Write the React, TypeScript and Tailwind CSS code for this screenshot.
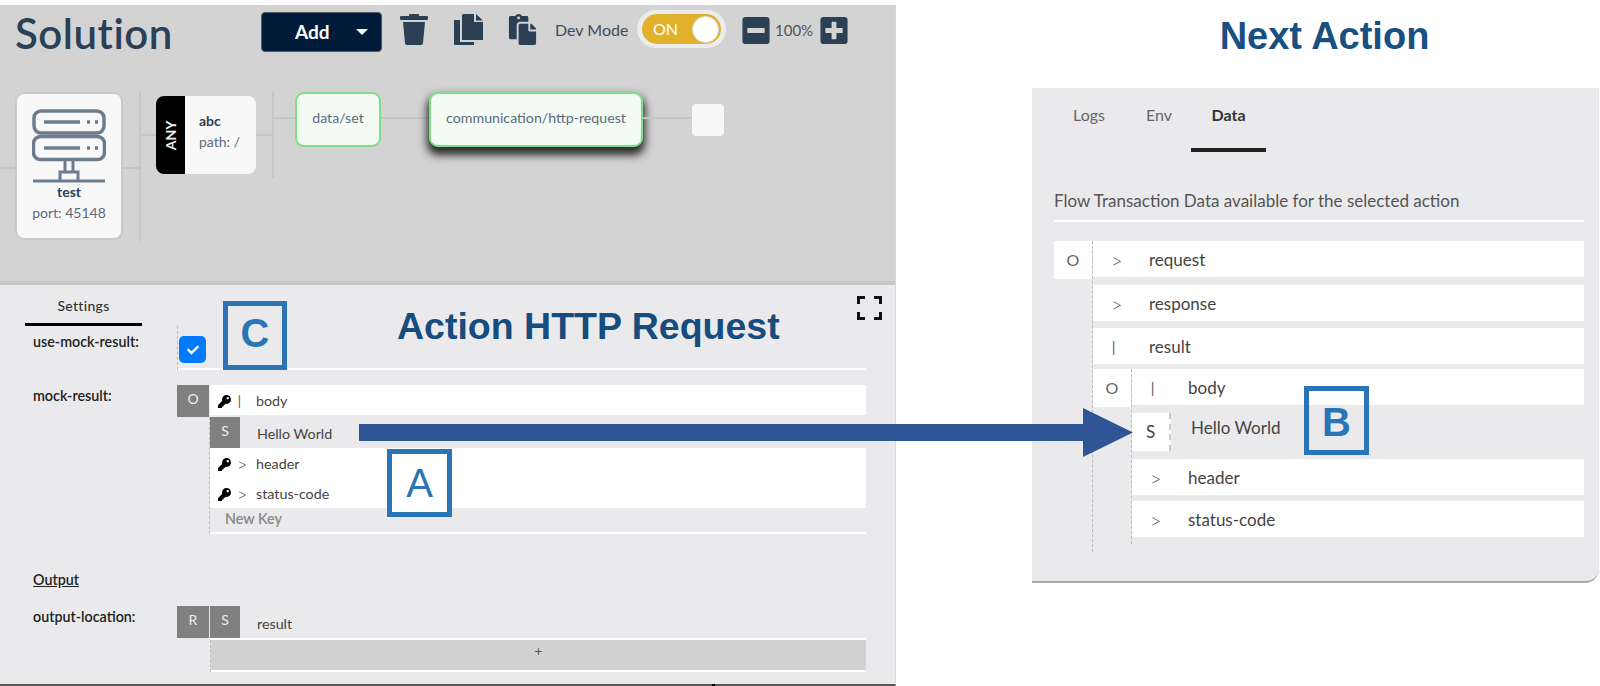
import { FaCheck, FaKey, FaMinusSquare, FaPlusSquare, FaPaste } from "react-icons/fa";

const font = { fontFamily: "Lato, 'Open Sans', sans-serif" };

function TrashIcon() {
  return (
    <svg width="28" height="31" viewBox="0 0 28 31" fill="#2b3f55">
      <rect x="9" y="0" width="10" height="3" rx="1" />
      <rect x="0" y="2" width="28" height="4" rx="1" />
      <path d="M3 8h22l-2 21a2 2 0 0 1-2 2H7a2 2 0 0 1-2-2z" />
    </svg>
  );
}

function CopyIcon() {
  return (
    <svg width="29" height="31" viewBox="0 0 29 31" fill="#2b3f55">
      <path d="M9 0H20V8H29V26H8V1z" />
      <path d="M22 0l7 6.500h-7z" />
      <path d="M0 6h6v22h14v3H1a1 1 0 0 1-1-1z" />
    </svg>
  );
}

function ServerIcon() {
  return (
    <svg width="74" height="74" viewBox="0 0 74 74" fill="none" stroke="#6c7c8e" strokeWidth="3.500">
      <rect x="2" y="2" width="70" height="22" rx="7" />
      <rect x="1.500" y="27.500" width="71" height="23" rx="7" />
      <path d="M12 13h36M12 39h36" />
      <path d="M55 13h3M63 13h3M55 39h3M63 39h3" strokeWidth="3.500" />
      <path d="M33 51v12M41 51v12M28 72v-9h18v9M1 72h72" strokeWidth="3" />
    </svg>
  );
}

function FullscreenIcon() {
  return (
    <svg width="25" height="24" viewBox="0 0 25 24" fill="none" stroke="#111" strokeWidth="3">
      <path d="M1.500 8V1.500H8M17 1.500h6.500V8M1.500 16v6.500H8M17 22.500h6.500V16" />
    </svg>
  );
}

function GrayCell({ label, className }: { label: string; className: string }) {
  return (
    <div className={`flex justify-center bg-[#808080] pt-[3px] text-[14px] text-[#eee] ${className}`}>{label}</div>
  );
}

function KeyRow({ mark, label }: { mark: string; label: string }) {
  return (
    <div className="flex h-[30px] items-center bg-white pt-[2px] text-[14.300px] text-[#444]">
      <FaKey className="ml-[8px] h-[13px] w-[13px] text-black" />
      <span className="ml-[6px] w-[19px] text-[18px] font-light leading-none text-[#555]">{mark}</span>
      <span>{label}</span>
    </div>
  );
}

function DataRow({ mark, label, className }: { mark: string; label: string; className: string }) {
  return (
    <div className={`flex h-[36px] items-center bg-white pl-[18px] pt-[2px] text-[17px] text-[#444] ${className}`}>
      <span className="w-[38px] text-[20px] font-light leading-none text-[#555]">{mark}</span>
      <span>{label}</span>
    </div>
  );
}

function Tag({ label, className }: { label: string; className: string }) {
  return (
    <div
      className={`absolute flex items-center justify-center border-[5px] border-[#2a75b5] text-[40px] leading-none text-[#2a75b5] ${className}`}
      style={{ fontFamily: "'Liberation Sans', sans-serif" }}
    >
      {label}
    </div>
  );
}

export default function App() {
  return (
    <div className="relative flex h-[686px] w-[1600px] overflow-hidden bg-white" style={font}>
      <div className="mt-[5px] flex h-[681px] w-[896px] shrink-0 flex-col border-b-2 border-r border-[#555] border-r-[#d8d8d8]">
        {/* flow canvas */}
        <div className="h-[276px] shrink-0 bg-[#d3d3d3] pl-px">
          <div className="flex h-[87px] items-start">
            <div className="ml-[14px] mt-[3px] w-[246px] text-[42px] font-semibold leading-[50px] tracking-[0.5px] text-[#2b3f55]">Solution</div>
            <button className="mt-[7px] flex h-[40px] w-[121px] items-center rounded-[4px] border border-[#556] bg-[#011c3a] pl-[33px] text-[19px] font-bold text-white">
              Add
              <span className="ml-[26px] h-0 w-0 border-x-[6px] border-t-[6px] border-x-transparent border-t-white" />
            </button>
            <div className="ml-[18px] mt-[9px]"><TrashIcon /></div>
            <div className="ml-[26px] mt-[9px]"><CopyIcon /></div>
            <div className="ml-[25px] mt-[9px]"><FaPaste className="h-[31px] w-[29px] text-[#2b3f55]" /></div>
            <div className="ml-[18px] mt-[16px] w-[74px] whitespace-nowrap text-[16px] leading-[18px] text-[#3c4c5e]">Dev Mode</div>
            <div className="ml-[8px] mt-[5px] flex h-[38px] w-[89px] items-center justify-center rounded-full bg-[#ececec]">
              <div className="flex h-[30px] w-[79px] items-center justify-between rounded-full bg-[#e2b12c] pl-[11px] pr-[2px] text-[16px] text-white">
                ON
                <span className="h-[27px] w-[27px] rounded-full border border-[#ddd] bg-white" />
              </div>
            </div>
            <FaMinusSquare className="ml-[16px] mt-[10px] h-[31px] w-[28px] text-[#2b3f55]" />
            <div className="ml-[5px] mt-[16px] w-[45px] text-[15px] leading-[18px] text-[#555]">100%</div>
            <FaPlusSquare className="mt-[10px] h-[31px] w-[28px] text-[#2b3f55]" />
          </div>

          <div className="flex items-start">
            <div className="mt-[75px] h-[2px] w-[14px] bg-[#c6c6c6]" />
            <div className="flex h-[148px] w-[108px] flex-col items-center rounded-[9px] border-2 border-[#c9c9c9] bg-[#f8f8f8] pt-[15px]">
              <ServerIcon />
              <div className="text-[14px] font-bold leading-[18px] text-[#2b3f55]">test</div>
              <div className="mt-[3px] text-[14px] leading-[18px] text-[#5c6b7b]">port: 45148</div>
            </div>
            <div className="mt-[75px] h-[2px] w-[16px] bg-[#c6c6c6]" />
            <div className="h-[149px] w-[2px] bg-[#c6c6c6]" />
            <div className="mt-[42px] h-[2px] w-[15px] bg-[#c6c6c6]" />
            <div className="mt-[4px] flex h-[78px] w-[100px] overflow-hidden rounded-[8px] bg-[#f8f8f8]">
              <div className="flex w-[29px] items-center justify-center bg-black">
                <span className="-rotate-90 text-[14px] font-bold text-[#eee]">ANY</span>
              </div>
              <div className="pl-[14px] pt-[15px]">
                <div className="text-[14px] font-bold leading-[20px] text-[#2b3f55]">abc</div>
                <div className="text-[14px] leading-[22px] text-[#5c6b7b]">path: /</div>
              </div>
            </div>
            <div className="mt-[42px] h-[2px] w-[16px] bg-[#c6c6c6]" />
            <div className="h-[86px] w-[2px] bg-[#c6c6c6]" />
            <div className="mt-[25px] h-[2px] w-[21px] bg-[#c6c6c6]" />
            <div className="flex h-[55px] w-[86px] justify-center rounded-[9px] border-2 border-[#7fdf85] bg-[#f4faf4] pt-[14px] text-[14.200px] leading-[20px] text-[#5c6b7b]">
              data/set
            </div>
            <div className="mt-[25px] h-[2px] w-[48px] bg-[#c6c6c6]" />
            <div className="flex h-[55px] w-[214px] justify-center rounded-[9px] border-2 border-[#7fdf85] bg-[#f4faf4] pt-[14px] text-[14.200px] leading-[20px] text-[#5c6b7b] shadow-[0_6px_8px_2px_#2a2a2a]">
              communication/http-request
            </div>
            <div className="mt-[25px] h-[2px] w-[49px] bg-[#c6c6c6]" />
            <div className="mt-[12px] h-[32px] w-[32px] rounded-[4px] bg-[#f8f8f8]" />
          </div>
        </div>

        <div className="h-[4px] shrink-0 bg-[#c6c6c6]" />

        {/* settings */}
        <div className="min-h-0 flex-1 bg-[#eaeaec] pl-[33px] pr-[29px] text-[14.300px] text-[#222]">
          <div className="ml-[-8px] flex h-[41px] w-[117px] justify-center border-b-[3px] border-black pt-[11px] text-[14px] font-medium leading-[20px] tracking-[0.3px] text-[#333]">
            Settings
          </div>

          <div className="flex">
            <div className="w-[144px] pt-[6px] font-semibold leading-[20px]">use-mock-result:</div>
            <div className="h-[44px] flex-1 border-l border-dashed border-[#bbb]">
              <div className="flex h-full items-end border-b-2 border-white pb-[5px] pl-px">
                <div className="flex h-[27px] w-[27px] items-center justify-center rounded-[5px] bg-[#007bff]">
                  <FaCheck className="h-[12px] w-[12px] text-white" />
                </div>
              </div>
            </div>
          </div>

          <div className="mt-[15px] flex">
            <div className="w-[144px] pt-[1px] font-semibold leading-[20px]">mock-result:</div>
            <div className="flex-1">
              <div className="flex">
                <GrayCell label="O" className="h-[32px] w-[32px] shrink-0" />
                <div className="ml-px flex-1"><KeyRow mark="I" label="body" /></div>
              </div>
              <div className="ml-[32px] border-l border-dashed border-[#bbb]">
                <div className="border-b-2 border-white">
                  <div className="flex h-[31px]">
                    <GrayCell label="S" className="w-[30px]" />
                    <span className="ml-[17px] pt-[6px] text-[#444]">Hello World</span>
                  </div>
                  <KeyRow mark=">" label="header" />
                  <KeyRow mark=">" label="status-code" />
                  <div className="flex h-[24px] items-start pl-[15px] font-semibold text-[#888]">New Key</div>
                </div>
              </div>
            </div>
          </div>

          <div className="mt-[36px] font-semibold leading-[20px] underline">Output</div>

          <div className="mt-[16px] flex">
            <div className="w-[144px] pt-[1px] font-semibold leading-[20px]">output-location:</div>
            <div className="flex-1">
              <div className="flex">
                <GrayCell label="R" className="h-[32px] w-[32px] shrink-0" />
                <div className="ml-px flex flex-1 border-b-2 border-b-white">
                  <GrayCell label="S" className="h-[32px] w-[30px]" />
                  <span className="ml-[17px] pt-[7px] text-[#444]">result</span>
                </div>
              </div>
              <div className="ml-[33px] border-l border-dashed border-[#bbb]">
                <div className="flex h-[32px] justify-center border-b-2 border-white bg-[#d2d2d2] text-[#555]">+</div>
              </div>
            </div>
          </div>
        </div>
      </div>

      {/* next action */}
      <div className="ml-[136px] flex-1">
        <div
          className="ml-[17px] mt-[14px] h-[74px] text-center text-[38px] font-bold leading-[44px] text-[#1a4f82]"
          style={{ fontFamily: "'Liberation Sans', sans-serif" }}
        >
          Next Action
        </div>
        <div className="mr-px h-[495px] rounded-br-[14px] border-b-2 border-[#aaa] bg-[#eaeaec] pl-[22px] pr-[15px]">
          <div className="flex h-[64px] items-start text-[16px] text-[#666]">
            <div className="ml-[19px] w-[73px] pt-[16px] leading-[22px]">Logs</div>
            <div className="w-[45px] pt-[16px] leading-[22px]">Env</div>
            <div className="flex h-[64px] w-[75px] justify-center border-b-4 border-[#222] pt-[16px] font-bold leading-[22px] text-[#333]">Data</div>
          </div>
          <div className="mt-[38px] h-[32px] border-b-2 border-white text-[17px] leading-[22px] text-[#555]">
            Flow Transaction Data available for the selected action
          </div>
          <div className="mt-[19px] flex">
            <div className="flex h-[38px] w-[38px] shrink-0 items-center justify-center bg-white text-[16px] text-[#666]">O</div>
            <div className="h-[311px] flex-1 border-l border-dashed border-[#bbb]">
              <DataRow mark=">" label="request" className="" />
              <DataRow mark=">" label="response" className="mt-[8px]" />
              <DataRow mark="I" label="result" className="mt-[7px]" />
              <div className="mt-[5px] flex">
                <div className="flex h-[38px] w-[38px] shrink-0 items-center justify-center bg-white text-[16px] text-[#666]">O</div>
                <div className="h-[175px] flex-1 border-l border-dashed border-[#bbb]">
                  <DataRow mark="I" label="body" className="" />
                  <div className="mt-[8px] flex h-[38px] items-center text-[17px] text-[#444]">
                    <div className="flex h-[38px] w-[39px] items-center justify-center border-r-2 border-dashed border-[#ccc] bg-white text-[#444]">S</div>
                    <span className="mb-[8px] ml-[20px]">Hello World</span>
                  </div>
                  <DataRow mark=">" label="header" className="mt-[8px]" />
                  <DataRow mark=">" label="status-code" className="mt-[6px]" />
                </div>
              </div>
            </div>
          </div>
        </div>
      </div>

      {/* annotations over the screenshots */}
      <div
        className="absolute left-[397px] top-[303px] text-[37.500px] font-bold leading-[46px] text-[#164c7e]"
        style={{ fontFamily: "'Liberation Sans', sans-serif" }}
      >
        Action HTTP Request
      </div>
      <div className="absolute left-[857px] top-[296px]"><FullscreenIcon /></div>
      <div className="absolute left-[712px] top-[684px] h-[2px] w-[3px] bg-black" />
      <Tag label="C" className="left-[223px] top-[301px] h-[69px] w-[64px] pb-[5px] font-bold" />
      <Tag label="A" className="left-[387px] top-[449px] h-[68px] w-[65px] bg-white" />
      <Tag label="B" className="left-[1304px] top-[386px] h-[69px] w-[65px] pt-[3px] font-bold" />
      <svg className="absolute left-[359px] top-[408px]" width="775" height="50" viewBox="0 0 775 50">
        <path d="M0 16H724V0L774 24.500 724 49V33H0z" fill="#2f5597" />
      </svg>
    </div>
  );
}
